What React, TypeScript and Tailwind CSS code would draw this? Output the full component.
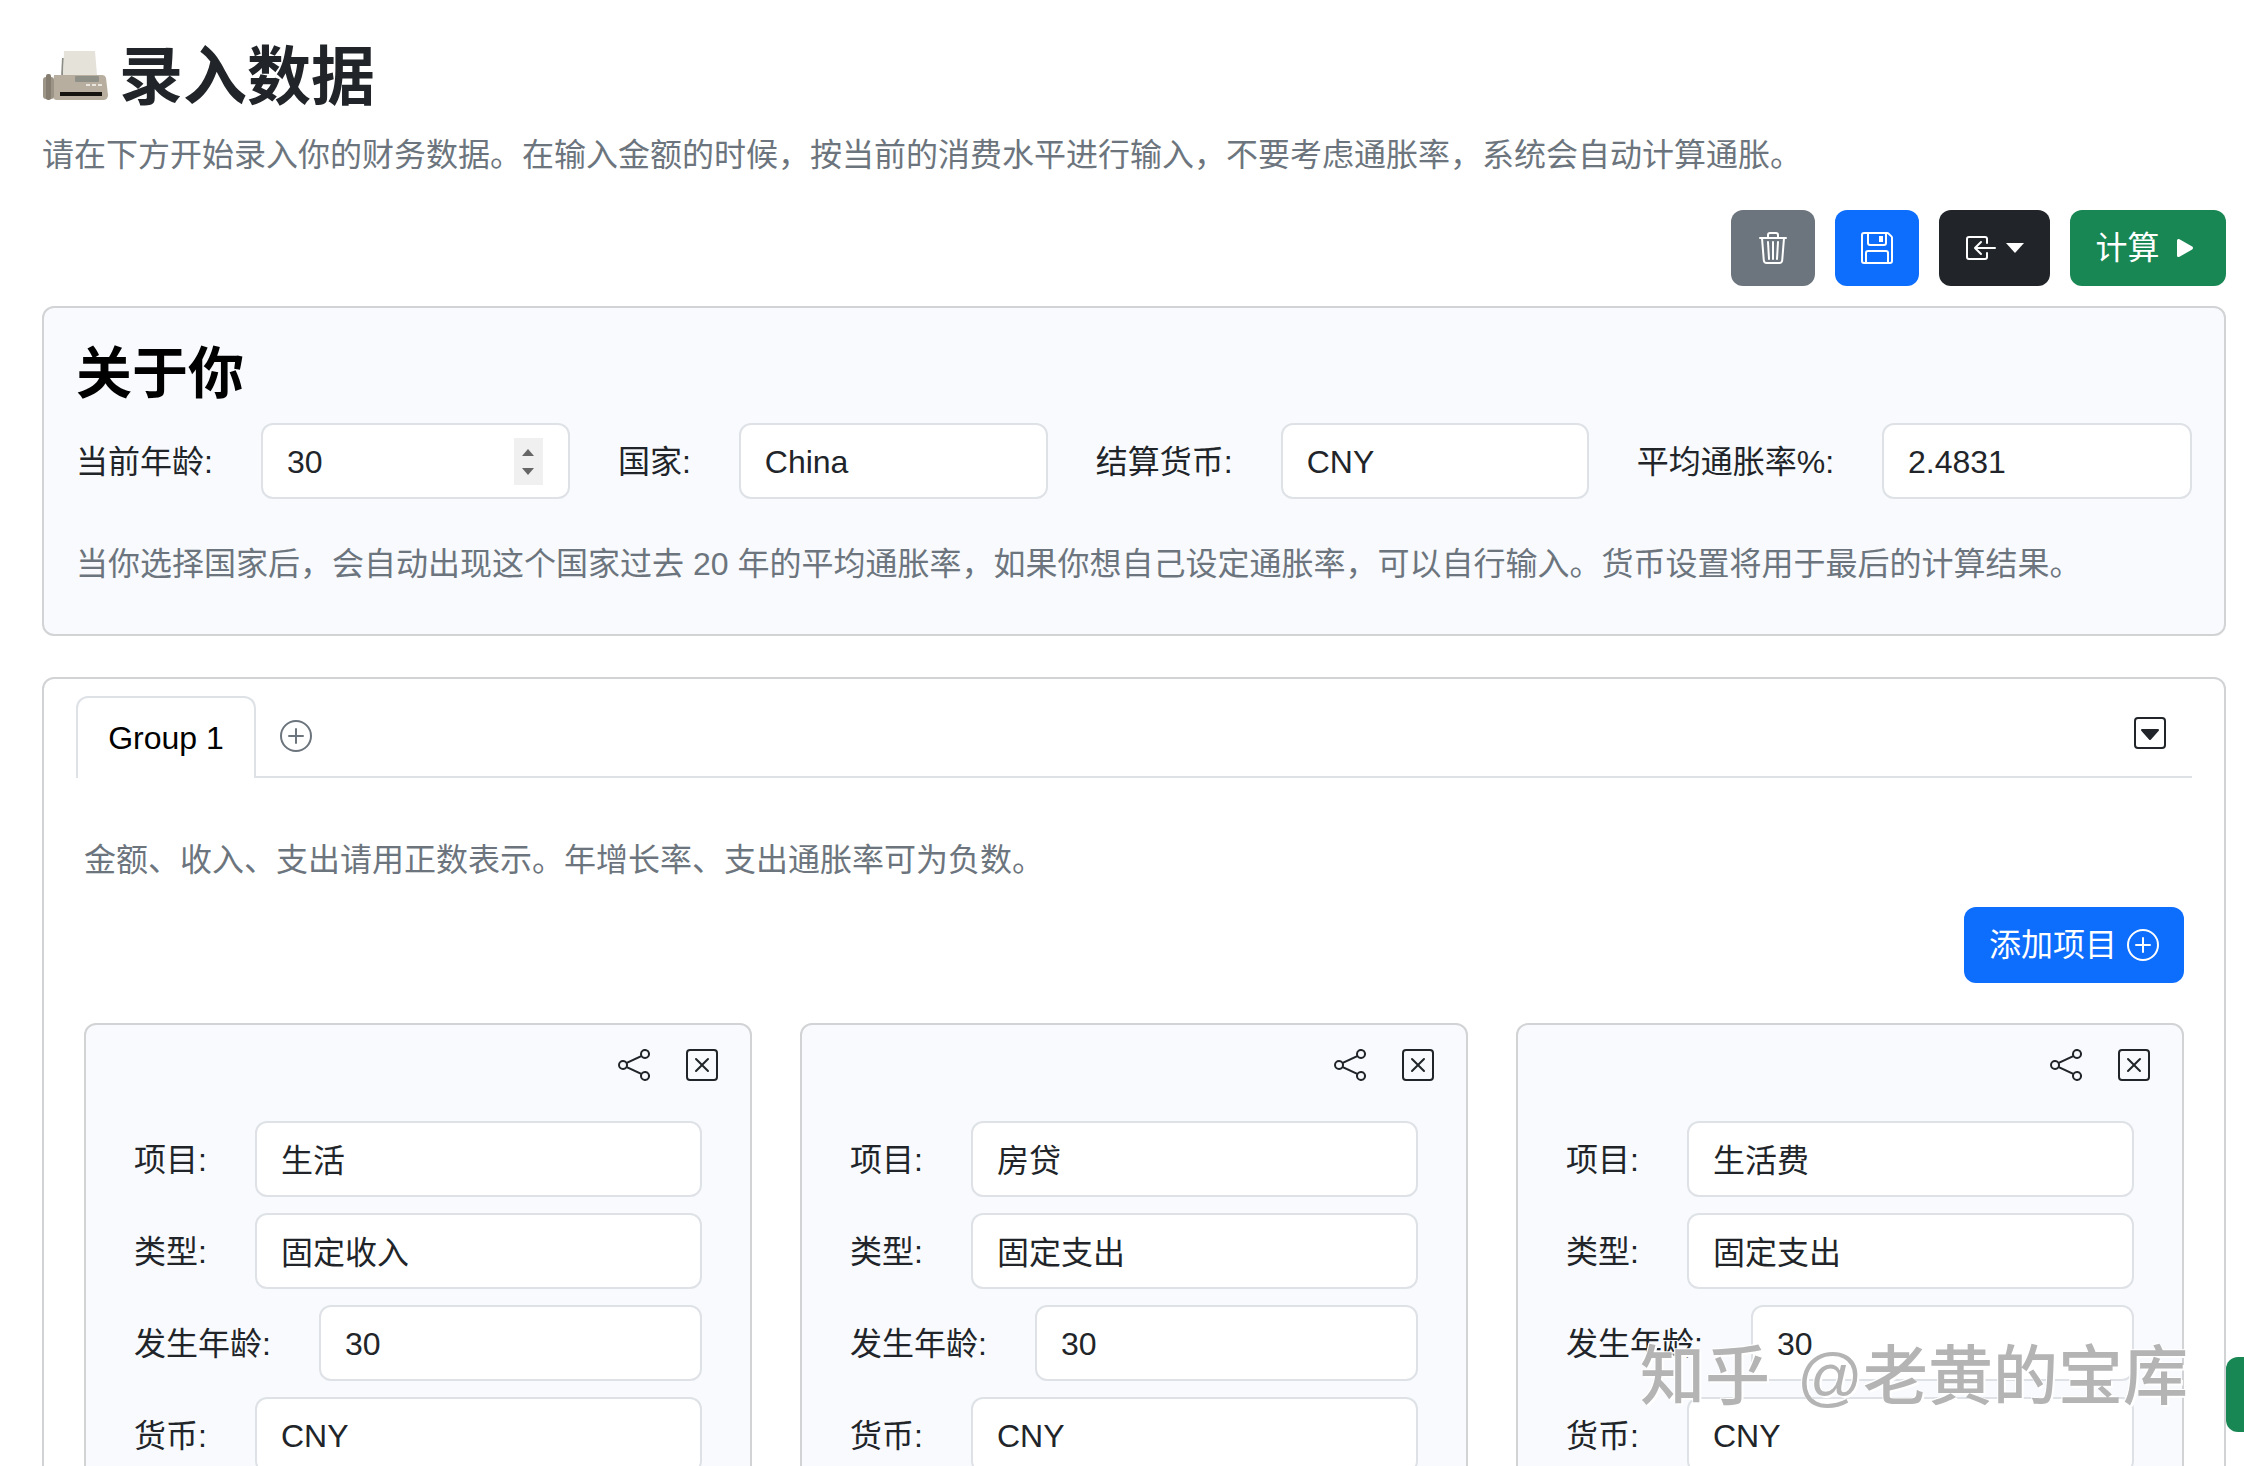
import {
  BsBoxArrowInLeft,
  BsCaretDownSquare,
  BsFloppy,
  BsPlayFill,
  BsPlusCircle,
  BsShare,
  BsTrash3,
  BsXSquare,
} from "react-icons/bs"

function FaxIcon() {
  return (
    <svg viewBox="0 0 66 50" className="mb-1 w-[66px] h-[50px] shrink-0">
      <path d="M19 26 L20 7 H22 L21 26 Z" fill="#8d8d88" />
      <path d="M22 0 H53 L55 24 H21 Z" fill="#e4e2d9" />
      <path d="M12 24 H60 Q63 24 64 27 L66 44 Q66 49 61 49 H15 Q11 49 11 45 Z" fill="#b7ae9f" />
      <rect x="33" y="25" width="24" height="6" rx="1" fill="#8f9189" />
      <rect x="44" y="33" width="4" height="2" fill="#e8e6df" />
      <rect x="50" y="33" width="4" height="2" fill="#e8e6df" />
      <rect x="56" y="33" width="4" height="2" fill="#e8e6df" />
      <rect x="18" y="41" width="42" height="4" fill="#15130f" />
      <rect x="1" y="26" width="11" height="22" rx="3" fill="#9c9486" />
      <rect x="4" y="23" width="5" height="26" rx="2" fill="#857d70" />
    </svg>
  )
}

function Field({ value, className = "" }: { value: string; className?: string }) {
  // fallback CJK glyphs sit lower in an input than latin ones
  const cjk = /[\u4e00-\u9fff]/.test(value)
  return (
    <input
      readOnly
      value={value}
      className={`h-[76px] min-w-0 rounded-[12px] border-2 border-[#dee2e6] bg-white px-6 text-[32px] text-[#212529] outline-none ${cjk ? "pb-[3px]" : "pt-[3px]"} ${className}`}
    />
  )
}

function Label({ children }: { children: string }) {
  return <label className="shrink-0 pt-[2px] text-[#212529]">{children}</label>
}

function Row({ label, value }: { label: string; value: string }) {
  return (
    <div className="flex items-center gap-12">
      <Label>{label}</Label>
      <Field value={value} className="flex-1" />
    </div>
  )
}

const items = [
  { name: "生活", type: "固定收入" },
  { name: "房贷", type: "固定支出" },
  { name: "生活费", type: "固定支出" },
]

export default function App() {
  return (
    <div className="relative h-[1466px] overflow-hidden bg-white pl-[42px] pr-[18px] pt-[38px] font-['Liberation_Sans','Noto_Sans_CJK_SC',sans-serif] text-[32px] leading-[48px] text-[#212529]">
      {/* Header */}
      <h1 className="flex items-center gap-[11px] text-[64px] font-bold leading-[79px]">
        <FaxIcon />
        录入数据
      </h1>
      <p className="mt-[14px] text-[#6c757d]">
        请在下方开始录入你的财务数据。在输入金额的时候，按当前的消费水平进行输入，不要考虑通胀率，系统会自动计算通胀。
      </p>

      <div className="mt-[31px] flex justify-end gap-5">
        <button className="flex h-[76px] w-[84px] items-center justify-center rounded-[12px] bg-[#6c757d] text-white">
          <BsTrash3 className="h-8 w-8" />
        </button>
        <button className="flex h-[76px] w-[84px] items-center justify-center rounded-[12px] bg-[#0d6efd] text-white">
          <BsFloppy className="h-8 w-8" />
        </button>
        <button className="flex h-[76px] w-[111px] items-center justify-center gap-2 rounded-[12px] bg-[#212529] text-white">
          <BsBoxArrowInLeft className="h-8 w-8" />
          <span className="h-0 w-0 border-x-[9px] border-t-[10px] border-x-transparent border-t-white" />
        </button>
        <button className="flex h-[76px] w-[156px] items-center justify-center gap-[9px] rounded-[12px] bg-[#198754] text-white">
          计算
          <BsPlayFill className="h-8 w-8" />
        </button>
      </div>

      {/* About you */}
      <section className="mt-5 h-[330px] rounded-[12px] border-2 border-[#d2d3d5] bg-[#f8fafd] px-8 pt-8">
        <h3 className="text-[56px] font-semibold leading-[67px] text-black">关于你</h3>
        <div className="mt-4 flex items-center gap-12">
          <Label>当前年龄:</Label>
          <div className="relative w-[309px]">
            <Field value="30" className="w-full" />
            <div className="absolute right-[27px] top-[15px] flex h-[47px] w-[29px] flex-col items-center justify-center gap-3 bg-[#f0f0f0]">
              <span className="h-0 w-0 border-x-[6px] border-b-[7px] border-x-transparent border-b-[#666]" />
              <span className="h-0 w-0 border-x-[6px] border-t-[7px] border-x-transparent border-t-[#666]" />
            </div>
          </div>
          <Label>国家:</Label>
          <Field value="China" className="w-[309px]" />
          <Label>结算货币:</Label>
          <Field value="CNY" className="w-[308px]" />
          <Label>平均通胀率%:</Label>
          <Field value="2.4831" className="w-[310px]" />
        </div>
        <p className="mt-[41px] text-[#6c757d]">
          当你选择国家后，会自动出现这个国家过去 20 年的平均通胀率，如果你想自己设定通胀率，可以自行输入。货币设置将用于最后的计算结果。
        </p>
      </section>

      {/* Groups */}
      <section className="mt-[41px] rounded-[12px] border-2 border-[#d2d3d5] bg-white px-8 pb-10 pt-[17px]">
        <div className="flex h-[82px] items-start border-b-2 border-[#dee2e6]">
          <div className="-mb-[2px] flex h-[82px] w-[180px] items-center justify-center rounded-t-[12px] border-2 border-b-0 border-[#dee2e6] bg-white text-black">
            Group 1
          </div>
          <BsPlusCircle className="ml-6 mt-6 h-8 w-8 text-[#6c757d]" />
          <BsCaretDownSquare className="ml-auto mr-[26px] mt-[21px] h-8 w-8 text-[#212529]" />
        </div>

        <div className="px-2">
          <p className="mt-[58px] text-[#6c757d]">
            金额、收入、支出请用正数表示。年增长率、支出通胀率可为负数。
          </p>
          <div className="mt-[23px] flex justify-end">
            <button className="flex h-[76px] w-[220px] items-center justify-center gap-[10px] rounded-[12px] bg-[#0d6efd] text-white">
              添加项目
              <BsPlusCircle className="h-8 w-8" />
            </button>
          </div>

          <div className="mt-10 grid grid-cols-3 gap-12">
            {items.map((item) => (
              <div
                key={item.name}
                className="h-[600px] rounded-[12px] border-2 border-[#d2d3d5] bg-[#f8fafd] px-8 pt-6"
              >
                <div className="flex justify-end gap-9">
                  <BsShare className="h-8 w-8 text-[#212529]" />
                  <BsXSquare className="h-8 w-8 text-[#212529]" />
                </div>
                <div className="mt-10 flex flex-col gap-4 px-4">
                  <Row label="项目:" value={item.name} />
                  <Row label="类型:" value={item.type} />
                  <Row label="发生年龄:" value="30" />
                  <Row label="货币:" value="CNY" />
                </div>
              </div>
            ))}
          </div>
        </div>
      </section>

      {/* Floating button at the right edge */}
      <div className="absolute right-0 top-[1357px] h-[75px] w-[18px] rounded-l-[12px] bg-[#198754]" />

      {/* Watermark */}
      <div className="pointer-events-none absolute left-[1640px] top-[1338px] whitespace-nowrap text-[65px] font-medium leading-[78px] text-[#b4b4b4] [text-shadow:2px_2px_0_#ffffff,-1px_-1px_0_#ffffff]">
        <span className="mr-[9px]">知乎</span> @老黄的宝库
      </div>
    </div>
  )
}
